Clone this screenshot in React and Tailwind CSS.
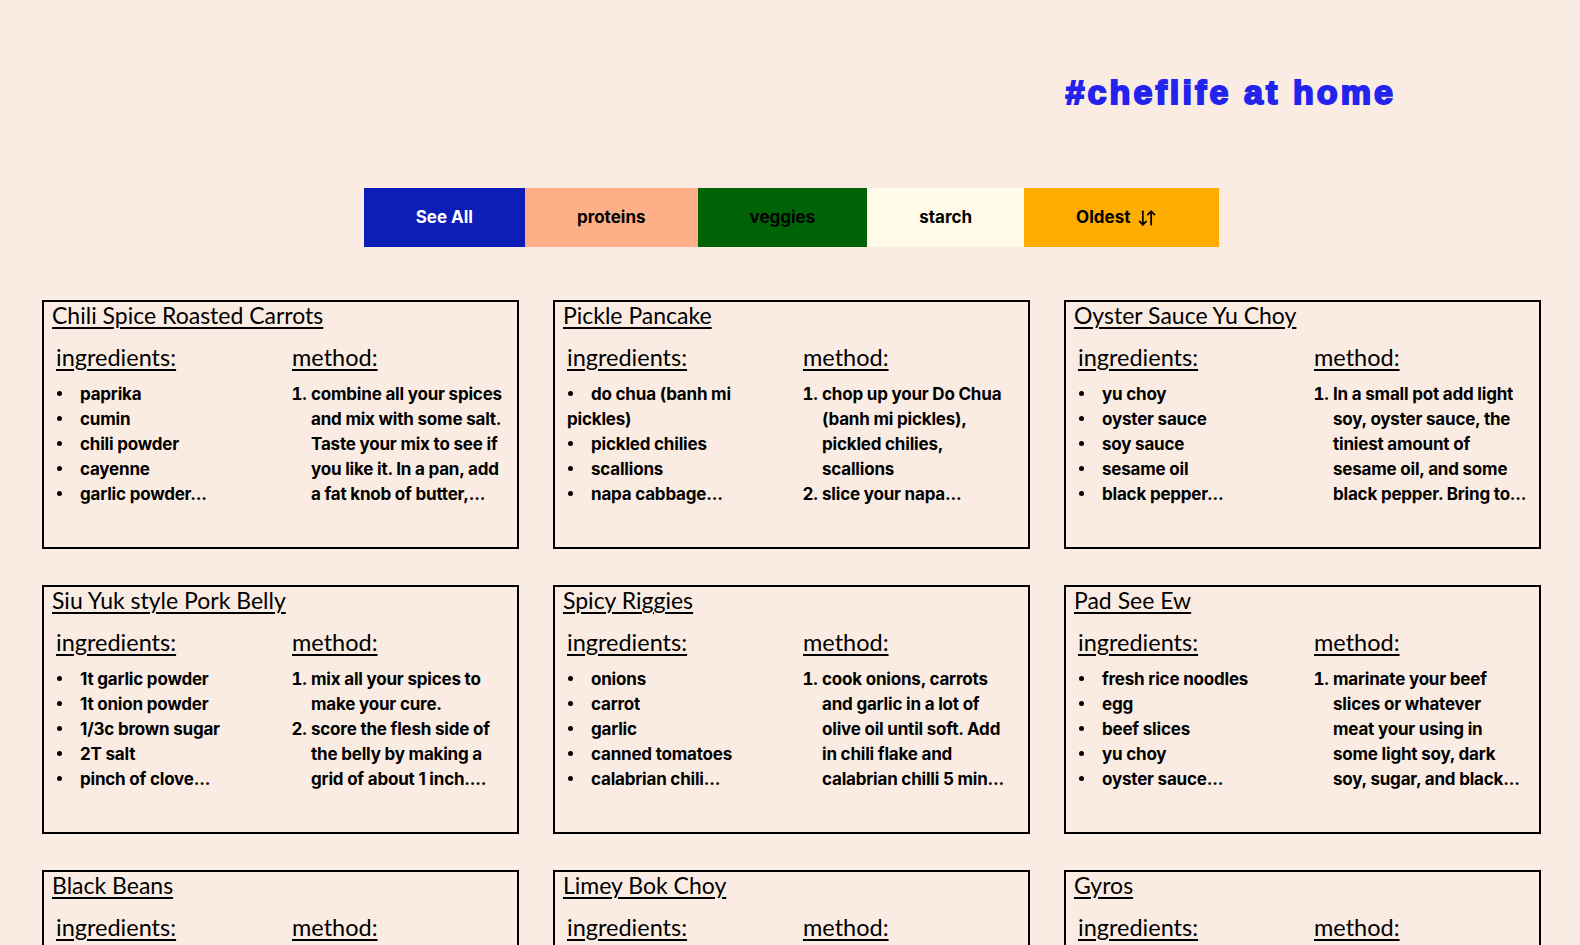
import React from "react";

const recipes = [
  {
    title: "Chili Spice Roasted Carrots",
    ingredients: [["paprika"], ["cumin"], ["chili powder"], ["cayenne"], ["garlic powder..."]],
    method: [["combine all your spices", "and mix with some salt.", "Taste your mix to see if", "you like it. In a pan, add", "a fat knob of butter,..."]],
  },
  {
    title: "Pickle Pancake",
    ingredients: [["do chua (banh mi", "pickles)"], ["pickled chilies"], ["scallions"], ["napa cabbage..."]],
    method: [["chop up your Do Chua", "(banh mi pickles),", "pickled chilies,", "scallions"], ["slice your napa..."]],
  },
  {
    title: "Oyster Sauce Yu Choy",
    ingredients: [["yu choy"], ["oyster sauce"], ["soy sauce"], ["sesame oil"], ["black pepper..."]],
    method: [["In a small pot add light", "soy, oyster sauce, the", "tiniest amount of", "sesame oil, and some", "black pepper. Bring to..."]],
  },
  {
    title: "Siu Yuk style Pork Belly",
    ingredients: [["1t garlic powder"], ["1t onion powder"], ["1/3c brown sugar"], ["2T salt"], ["pinch of clove..."]],
    method: [["mix all your spices to", "make your cure."], ["score the flesh side of", "the belly by making a", "grid of about 1 inch...."]],
  },
  {
    title: "Spicy Riggies",
    ingredients: [["onions"], ["carrot"], ["garlic"], ["canned tomatoes"], ["calabrian chili..."]],
    method: [["cook onions, carrots", "and garlic in a lot of", "olive oil until soft. Add", "in chili flake and", "calabrian chilli 5 min..."]],
  },
  {
    title: "Pad See Ew",
    ingredients: [["fresh rice noodles"], ["egg"], ["beef slices"], ["yu choy"], ["oyster sauce..."]],
    method: [["marinate your beef", "slices or whatever", "meat your using in", "some light soy, dark", "soy, sugar, and black..."]],
  },
  {
    title: "Black Beans",
    ingredients: [["black beans"], ["onion"], ["garlic"], ["cumin"], ["bay leaf..."]],
    method: [["soak your beans overnight", "in salted water. Drain and", "add to a pot with onion", "and garlic..."]],
  },
  {
    title: "Limey Bok Choy",
    ingredients: [["bok choy"], ["lime"], ["garlic"], ["fish sauce"], ["sugar..."]],
    method: [["cut your bok choy in half", "and wash well."], ["mix lime juice, fish", "sauce and..."]],
  },
  {
    title: "Gyros",
    ingredients: [["ground lamb"], ["onion"], ["garlic"], ["oregano"], ["pita..."]],
    method: [["grate the onion and", "squeeze out the liquid.", "Mix with the lamb and", "spices..."]],
  },
];

function SortIcon() {
  return (
    <svg width="20" height="20" viewBox="0 0 24 24" fill="none" stroke="currentColor" strokeWidth="2.1" strokeLinecap="round" strokeLinejoin="round">
      <path d="m3 16 4 4 4-4" />
      <path d="M7 20V4" />
      <path d="m21 8-4-4-4 4" />
      <path d="M17 4v16" />
    </svg>
  );
}

function Lines({ lines }) {
  return lines.map((l, idx) => (
    <React.Fragment key={idx}>
      {idx > 0 && <br />}
      {l}
    </React.Fragment>
  ));
}

function Card({ r }) {
  return (
    <article className="h-[249px] border-2 border-black px-[8px] overflow-hidden">
      <h2 className="font-['Lato'] text-[23px] leading-[1.2] underline underline-offset-[3px] decoration-[1.5px] text-black">{r.title}</h2>
      <div className="flex mt-[13px] font-['Inter'] font-bold text-[17px] leading-[25px] tracking-[-0.2px] text-black">
        <div className="ml-[4px] w-[220px] shrink-0">
          <h3 className="font-['Lato'] font-normal text-[23.5px] leading-[1.2] tracking-normal underline underline-offset-[3px] decoration-[1.5px]">ingredients:</h3>
          <ul className="mt-[11px]">
            {r.ingredients.map((i) => (
              <li key={i[0]} className="whitespace-nowrap">
                <span className="inline-block w-[24px] pl-[1px] align-middle">
                  <span className="block w-[5px] h-[5px] rounded-full bg-black mb-[3px]" />
                </span>
                <Lines lines={i} />
              </li>
            ))}
          </ul>
        </div>
        <div className="ml-[16px] w-[225px] shrink-0">
          <h3 className="font-['Lato'] font-normal text-[23.5px] leading-[1.2] tracking-normal underline underline-offset-[3px] decoration-[1.5px]">method:</h3>
          <ol className="mt-[11px] list-decimal pl-[19px]">
            {r.method.map((m) => (
              <li key={m[0]} className="whitespace-nowrap">
                <Lines lines={m} />
              </li>
            ))}
          </ol>
        </div>
      </div>
    </article>
  );
}

export default function App() {
  const buttons = [
    { label: "See All", cls: "bg-[#0d1db8] text-white" },
    { label: "proteins", cls: "bg-[#ffaf87] text-black" },
    { label: "veggies", cls: "bg-[#006407] text-black" },
    { label: "starch", cls: "bg-[#fffbe8] text-black" },
  ];
  return (
    <div className="min-h-screen bg-[#fbece3] pb-10">
      <header className="flex justify-end pr-[184px] pt-[75px]">
        <h1 className="font-['Liberation_Sans'] font-bold text-[34px] leading-none text-[#2323ee] tracking-[3.1px] [-webkit-text-stroke:2px_#2323ee]">#cheflife at home</h1>
      </header>
      <nav className="flex justify-center mt-[79px] pl-[3px] font-['Inter'] font-bold text-[17px]">
        {buttons.map((b) => (
          <button key={b.label} className={`h-[59px] px-[52px] flex items-center ${b.cls}`}>{b.label}</button>
        ))}
        <button className="h-[59px] pl-[52px] pr-[62px] flex items-center gap-[7px] bg-[#ffad00] text-black">
          Oldest <SortIcon />
        </button>
      </nav>
      <main className="grid grid-cols-[477px_477px_477px] gap-x-[34px] gap-y-[36px] pl-[42px] mt-[53px]">
        {recipes.map((r) => (
          <Card key={r.title} r={r} />
        ))}
      </main>
    </div>
  );
}
